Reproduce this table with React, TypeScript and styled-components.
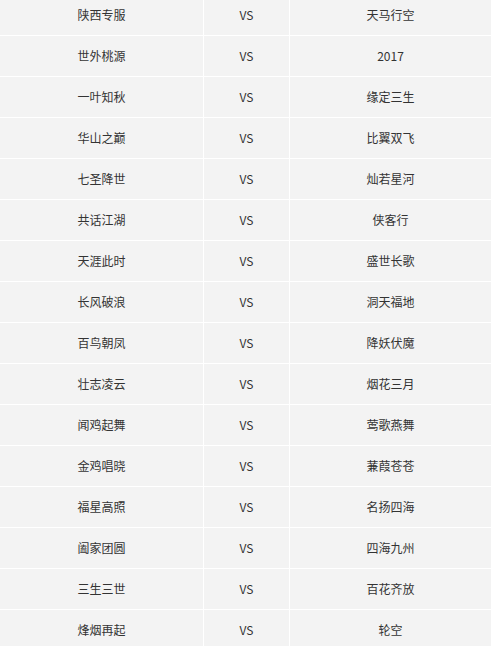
import React from "react";
import styled, { createGlobalStyle } from "styled-components";

const Global = createGlobalStyle`
  html, body { margin: 0; padding: 0; background: #ffffff; overflow: hidden; }
  body { font-family: "Microsoft YaHei", "Noto Sans CJK SC", "Noto Sans", sans-serif; }
`;

const Table = styled.div`
  width: 491px;
  margin-top: -5px;
  display: grid;
  grid-template-columns: 203px 85px 201px;
  column-gap: 1px;
  row-gap: 1px;
  background: #ffffff;
`;

const Cell = styled.div`
  height: 40px;
  background: #f3f3f3;
  color: #333333;
  font-size: 12px;
  display: flex;
  align-items: center;
  justify-content: center;
  line-height: 1;
`;

const rows: [string, string][] = [
  ["陕西专服", "天马行空"],
  ["世外桃源", "2017"],
  ["一叶知秋", "缘定三生"],
  ["华山之巅", "比翼双飞"],
  ["七圣降世", "灿若星河"],
  ["共话江湖", "侠客行"],
  ["天涯此时", "盛世长歌"],
  ["长风破浪", "洞天福地"],
  ["百鸟朝凤", "降妖伏魔"],
  ["壮志凌云", "烟花三月"],
  ["闻鸡起舞", "莺歌燕舞"],
  ["金鸡唱晓", "蒹葭苍苍"],
  ["福星高照", "名扬四海"],
  ["阖家团圆", "四海九州"],
  ["三生三世", "百花齐放"],
  ["烽烟再起", "轮空"],
];

export default function App() {
  return (
    <>
      <Global />
      <Table>
        {rows.map(([a, b], i) => (
          <React.Fragment key={i}>
            <Cell>{a}</Cell>
            <Cell>VS</Cell>
            <Cell>{b}</Cell>
          </React.Fragment>
        ))}
      </Table>
    </>
  );
}
